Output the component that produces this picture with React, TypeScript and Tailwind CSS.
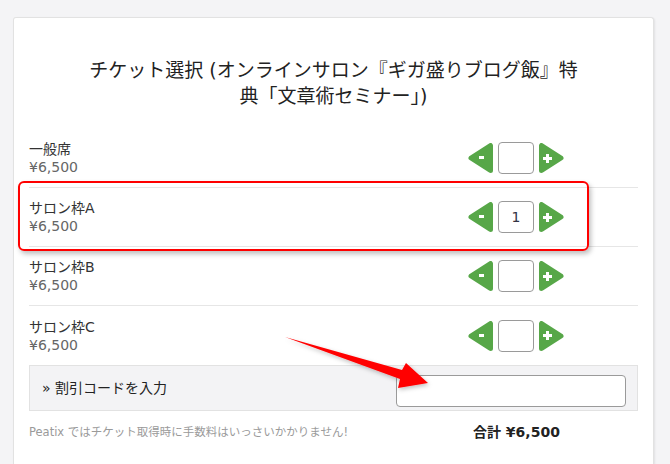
import React from "react";

const GREEN = "#57a748";

function Arrow({ dir }: { dir: "left" | "right" }) {
  const pts = dir === "left" ? "3,15 22.5,2.5 22.5,27.5" : "22,15 2.5,2.5 2.5,27.5";
  return (
    <div className="relative w-[25px] h-[30px]">
      <svg width="25" height="30" viewBox="0 0 25 30" className="absolute inset-0">
        <polygon points={pts} fill={GREEN} stroke={GREEN} strokeWidth="5" strokeLinejoin="round" />
      </svg>
      {dir === "left" ? (
        <span className="absolute left-[11px] top-[13px] w-[5px] h-[3px] bg-white" />
      ) : (
        <>
          <span className="absolute left-[4px] top-[13.5px] w-[9px] h-[3px] bg-white" />
          <span className="absolute left-[7px] top-[10.5px] w-[3px] h-[9px] bg-white" />
        </>
      )}
    </div>
  );
}

function Row({ name, value, last }: { name: string; value?: string; last?: boolean }) {
  return (
    <div className={`h-[59px] flex items-center justify-between ${last ? "" : "border-b border-[#e6e6e6]"}`}>
      <div className="leading-[18px] text-[14px]">
        <div className="text-[#333]">{name}</div>
        <div className="text-[#666]">¥6,500</div>
      </div>
      <div className="flex items-center mr-[74px]">
        <Arrow dir="left" />
        <div className="ml-[5px] mr-[5px] w-[36px] h-[32px] border border-[#9a9a9a] rounded-[4px] flex items-center justify-center text-[14px] text-[#334]">
          {value ?? ""}
        </div>
        <Arrow dir="right" />
      </div>
    </div>
  );
}

export default function App() {
  return (
    <div className="relative h-[464px] bg-[#f4f4f6] pt-[17px] pl-[13px] font-['DejaVu_Sans','Noto_Sans_CJK_JP',sans-serif] overflow-hidden">
      <div className="relative w-[641px] h-[447px] bg-white border border-b-0 border-[#e2e2e2] rounded-t-[3px] shadow-[1px_1px_2px_rgba(0,0,0,0.08)] px-[15px]">
        <h1 className="w-[496px] mx-auto pt-[39px] text-center text-[19px] leading-[26px] text-[#222] font-normal">
          チケット選択 (オンラインサロン『ギガ盛りブログ飯』特典「文章術セミナー」)
        </h1>
        <div className="mt-[20px]">
          <Row name="一般席" />
          <Row name="サロン枠A" value="1" />
          <Row name="サロン枠B" />
          <Row name="サロン枠C" last />
        </div>
        <div className="h-[46px] bg-[#f3f3f5] border border-[#e2e2e2] flex items-center justify-between pl-[12px] pr-[11px]">
          <span className="text-[14px] text-[#222]">» 割引コードを入力</span>
          <div className="mt-[6px] w-[230px] h-[32px] bg-white border border-[#9a9a9a] rounded-[4px]" />
        </div>
        <div className="mt-[11px] flex items-center leading-[20px]">
          <div className="w-[444px] text-[11.5px] text-[#9a9a9a]">Peatix ではチケット取得時に手数料はいっさいかかりません!</div>
          <div className="text-[14px] font-bold text-[#222]">合計 ¥6,500</div>
        </div>
        <div className="absolute left-[4px] top-[163px] w-[571px] h-[70px] border-2 border-[#ff0000] rounded-[6px] shadow-[2px_3px_5px_rgba(0,0,0,0.25)] pointer-events-none" />
      </div>
      <svg className="absolute left-0 top-0 pointer-events-none" width="670" height="464" viewBox="0 0 670 464">
        <defs>
          <filter id="ds" x="-10%" y="-10%" width="120%" height="140%">
            <feDropShadow dx="1" dy="2" stdDeviation="2" floodColor="#000" floodOpacity="0.25" />
          </filter>
        </defs>
        <polygon points="285,337 402,370 406,363 428,383 398,388 400,379" fill="#ff0000" filter="url(#ds)" />
      </svg>
    </div>
  );
}
